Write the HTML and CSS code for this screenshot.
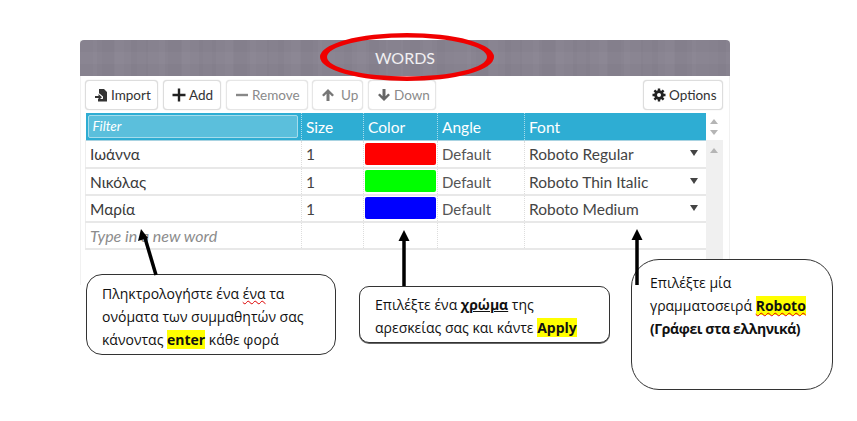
FILE: index.html
```html
<!DOCTYPE html>
<html lang="el">
<head>
<meta charset="utf-8">
<title>Words</title>
<link rel="stylesheet" href="styles.css">
</head>
<body>
<section class="panel">
  <header class="panel-head">WORDS</header>
  <div class="panel-body">
    <div class="toolbar">
      <button class="btn"><svg class="ic" viewBox="0 0 14 14"><path d="M5 1h5l3 3v9.500H4V11h4.500L9 10.500V8.500L5.500 5.500H5z" fill="#333"/><path d="M1 8h3.500V6l3.500 3.200-3.500 3V10H1z" fill="#333"/></svg>Import</button>
      <button class="btn"><svg class="ic" viewBox="0 0 14 14"><path d="M5.800 .5h2.400v5.300h5.300v2.400H8.200v5.300H5.800V8.200H.5V5.800h5.300z" fill="#222"/></svg>Add</button>
      <button class="btn off"><svg class="ic" viewBox="0 0 14 14"><path d="M1 5.800h12v2.400H1z" fill="#888"/></svg>Remove</button>
      <button class="btn off"><svg class="ic" viewBox="0 0 14 14"><path d="M7 1l6 6-1.800 1.500L8.500 5.800V13h-3V5.800L2.800 8.500 1 7z" fill="#777"/></svg>Up</button>
      <button class="btn off"><svg class="ic" viewBox="0 0 14 14"><path d="M7 13l6-6-1.800-1.500-2.700 2.700V1h-3v7.200L2.800 5.500 1 7z" fill="#666"/></svg>Down</button>
      <button class="btn opts"><svg class="ic" viewBox="0 0 14 14"><path d="M7 .5v13M.5 7h13M2.400 2.400l9.200 9.200M11.600 2.400l-9.200 9.200" stroke="#222" stroke-width="2.400"/><circle cx="7" cy="7" r="4.800" fill="#222"/><circle cx="7" cy="7" r="2" fill="#fff"/></svg>Options</button>
    </div>
    <div class="grid-wrap">
      <table class="grid">
        <colgroup><col class="c1"><col class="c2"><col class="c3"><col class="c4"><col class="c5"></colgroup>
        <thead>
          <tr>
            <th class="filter-cell"><div class="filter">Filter</div></th>
            <th>Size</th><th>Color</th><th>Angle</th><th>Font</th>
          </tr>
        </thead>
        <tbody>
          <tr><td>Ιωάννα</td><td>1</td><td class="sw-cell"><div class="sw red"></div></td><td class="muted">Default</td><td class="font">Roboto Regular<i class="caret"></i></td></tr>
          <tr><td>Νικόλας</td><td>1</td><td class="sw-cell"><div class="sw green"></div></td><td class="muted">Default</td><td class="font">Roboto Thin Italic<i class="caret"></i></td></tr>
          <tr><td>Μαρία</td><td>1</td><td class="sw-cell"><div class="sw blue"></div></td><td class="muted">Default</td><td class="font">Roboto Medium<i class="caret"></i></td></tr>
          <tr class="new"><td>Type in a new word</td><td></td><td></td><td></td><td></td></tr>
        </tbody>
      </table>
      <div class="scroll">
        <div class="scroll-top"><i class="up"></i><i class="down"></i></div>
        <div class="scroll-track"><i class="up"></i></div>
      </div>
    </div>
  </div>
</section>

<svg class="ink" width="857" height="421" viewBox="0 0 857 421">
  <path fill-rule="evenodd" fill="#f00000" d="M320 57a87 24 0 1 0 174 0a87 24 0 1 0-174 0zM327 57a80 19.500 0 1 1 160 0a80 19.500 0 1 1-160 0z"/>
</svg>

<div class="note n1">Πληκτρολογήστε ένα <span class="sq">ένα</span> τα<br>ονόματα των συμμαθητών σας<br>κάνοντας <b class="hl">enter</b> κάθε φορά</div>
<div class="note n2">Επιλέξτε ένα <b class="u">χρώμα</b> της<br>αρεσκείας σας και κάντε <b class="hl">Apply</b></div>
<div class="note n3">Επιλέξτε μία<br>γραμματοσειρά <b class="hl sq">Roboto</b><br><b class="tight">(Γράφει στα ελληνικά)</b></div>

<svg class="ink top" width="857" height="421" viewBox="0 0 857 421">
  <path d="M156 275L145 238" stroke="#000" stroke-width="3.500" fill="none"/>
  <path d="M141 229l-3 12 10-3z" fill="#000"/>
  <path d="M404 286V240" stroke="#000" stroke-width="3.500" fill="none"/>
  <path d="M404 230l-5.500 11h11z" fill="#000"/>
  <path d="M637 285V240" stroke="#000" stroke-width="3.500" fill="none"/>
  <path d="M637 229l-5.500 11h11z" fill="#000"/>
</svg>
</body>
</html>
```

FILE: styles.css
```css
* { box-sizing: border-box; }
html, body { margin: 0; background: #fff; }
body {
  position: relative;
  width: 857px;
  height: 421px;
  overflow: hidden;
  padding: 40px 0 0 80px;
  font-family: Lato, "Open Sans", "Noto Sans", sans-serif;
}
.panel { width: 650px; height: 245px; border-left: 1px solid #f1f1f1; border-right: 1px solid #f1f1f1; }
.panel-head {
  height: 36px;
  margin: 0 -1px;
  border-radius: 4px 4px 0 0;
  background-color: #87828f;
  background-image:
    linear-gradient(90deg, rgba(255,255,255,.025) 50%, transparent 50%),
    linear-gradient(rgba(0,0,0,.02) 50%, transparent 50%),
    linear-gradient(90deg, transparent 60%, rgba(255,255,255,.02) 60%);
  background-size: 34px 36px, 46px 24px, 22px 12px;
  color: #f1f0f2;
  font-size: 16px;
  line-height: 36px;
  text-align: center;
}
.panel-body { padding: 4px 6px 0 4px; }
.toolbar { display: flex; gap: 5px; height: 30px; }
.btn {
  display: flex;
  align-items: center;
  gap: 3px;
  height: 30px;
  padding: 0 4px 0 8px;
  border: 1px solid #ddd;
  border-radius: 4px;
  background: #fff;
  color: #333;
  font: 13.500px Lato, "Open Sans", sans-serif;
  box-shadow: 0 0 1px #ccc;
  white-space: nowrap;
}
.btn:nth-child(1) { width: 73px; }
.btn:nth-child(2) { width: 58px; }
.btn:nth-child(3) { width: 82px; }
.btn:nth-child(4) { width: 51px; margin-left: -1px; gap: 6px; }
.btn:nth-child(5) { width: 68px; }
.btn.off { color: #8a8a8a; border-color: #e6e6e6; }
.btn.opts { margin-left: auto; width: 80px; }
.ic { width: 14px; height: 14px; flex: none; }
.grid-wrap { display: flex; margin-top: 3px; }
.grid { width: 620px; height: 135px; table-layout: fixed; border-collapse: collapse; font-size: 15.500px; }
.c1 { width: 216px; } .c2 { width: 62px; } .c3 { width: 74px; } .c4 { width: 87px; } .c5 { width: 181px; }
th {
  height: 27px;
  padding: 0 4px;
  background: #2eadd3;
  color: #fff;
  font-weight: 400;
  text-align: left;
  border-left: 1px dotted #a8dcec;
}
th:first-child { border-left: 0; }
.filter-cell { padding: 2px 3px 2px 2px; }
.filter {
  height: 23px;
  padding-left: 4px;
  background: #5bbfdc;
  border: 1px solid #a5dcec;
  border-radius: 2px;
  color: #fff;
  font: italic 13.500px/21px Lato, "Open Sans", sans-serif;
}
td {
  height: 27px;
  padding: 1px 4px 0;
  color: #444;
  border-left: 1px dotted #ddd;
  border-bottom: 2px solid #e8e8e8;
  white-space: nowrap;
}
td:first-child { border-left: 1px solid #eee; color: #3a3a3a; }
tbody tr:first-child td { border-top: 1px solid #a9d3e1; }
.muted { color: #555; font-size: 15px; }
.font { position: relative; color: #444; }
.sw-cell { padding: 0 1px 0 1px; }
.sw { height: 22px; border-radius: 2px; }
.red { background: #f00; } .green { background: #0f0; } .blue { background: #00f; }
.caret {
  position: absolute;
  right: 8px;
  top: 9px;
  border: 4px solid transparent;
  border-top: 6px solid #444;
  border-bottom: 0;
}
.new td:first-child { color: #8c8c8c; font-style: italic; font-size: 16px; }
.scroll { width: 18px; height: 147px; background: #f0f0f0; }
.scroll-top { height: 27px; background: #fff; display: flex; flex-direction: column; align-items: center; gap: 6px; padding-top: 6px; }
.scroll-track { display: flex; flex-direction: column; align-items: center; padding-top: 8px; }
.up { border: 4px solid transparent; border-bottom: 5px solid #b5b5b5; border-top: 0; }
.down { border: 4px solid transparent; border-top: 5px solid #b5b5b5; border-bottom: 0; }
.ink { position: absolute; left: 0; top: 0; pointer-events: none; }
.note {
  position: absolute;
  background: #fff;
  border: 1px solid #333;
  color: #111;
  font-family: "Open Sans", "Noto Sans", sans-serif;
  font-size: 14px;
  line-height: 23px;
  white-space: nowrap;
}
.n1 { left: 86px; top: 274px; width: 250px; height: 81px; border-radius: 16px; padding: 7px 0 0 15px; }
.n2 { left: 359px; top: 286px; width: 251px; height: 57px; border-radius: 10px; padding: 6px 0 0 15px; box-shadow: 0 1px 0 #666; }
.n3 { left: 631px; top: 259px; width: 202px; height: 131px; border-radius: 28px; padding: 11px 0 0 18px; }
.hl { background: #ff0; }
.u { text-decoration: underline; }
.sq { text-decoration: underline wavy #d00 1px; }
.tight { letter-spacing: -.4px; }
```
